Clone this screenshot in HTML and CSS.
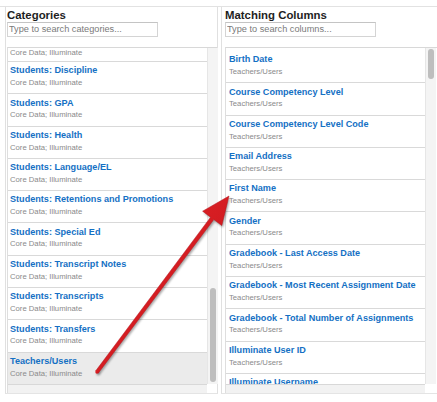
FILE: index.html
```html
<!DOCTYPE html>
<html>
<head>
<meta charset="utf-8">
<link rel="stylesheet" href="styles.css">
</head>
<body>
<div class="page">
  <section class="panel panel-left">
    <h2 class="panel-title">Categories</h2>
    <input class="search" type="text" placeholder="Type to search categories...">
    <div class="list">
      <div class="list-main">
        <div class="viewport">
          <div class="item partial"><div class="item-sub">Core Data; Illuminate</div></div>
          <div class="item"><div class="item-title">Students: Discipline</div><div class="item-sub">Core Data; Illuminate</div></div>
          <div class="item"><div class="item-title">Students: GPA</div><div class="item-sub">Core Data; Illuminate</div></div>
          <div class="item"><div class="item-title">Students: Health</div><div class="item-sub">Core Data; Illuminate</div></div>
          <div class="item"><div class="item-title">Students: Language/EL</div><div class="item-sub">Core Data; Illuminate</div></div>
          <div class="item"><div class="item-title">Students: Retentions and Promotions</div><div class="item-sub">Core Data; Illuminate</div></div>
          <div class="item"><div class="item-title">Students: Special Ed</div><div class="item-sub">Core Data; Illuminate</div></div>
          <div class="item"><div class="item-title">Students: Transcript Notes</div><div class="item-sub">Core Data; Illuminate</div></div>
          <div class="item"><div class="item-title">Students: Transcripts</div><div class="item-sub">Core Data; Illuminate</div></div>
          <div class="item"><div class="item-title">Students: Transfers</div><div class="item-sub">Core Data; Illuminate</div></div>
          <div class="item selected"><div class="item-title">Teachers/Users</div><div class="item-sub">Core Data; Illuminate</div></div>
        </div>
        <div class="vtrack"><div class="thumb" style="margin-top:240px;height:94px"></div></div>
      </div>
      <div class="hbar"><div class="htrack"></div><div class="corner"></div></div>
    </div>
  </section>
  <section class="panel panel-right">
    <h2 class="panel-title">Matching Columns</h2>
    <input class="search" type="text" placeholder="Type to search columns...">
    <div class="list">
      <div class="list-main">
        <div class="viewport padded">
          <div class="item"><div class="item-title">Birth Date</div><div class="item-sub">Teachers/Users</div></div>
          <div class="item"><div class="item-title">Course Competency Level</div><div class="item-sub">Teachers/Users</div></div>
          <div class="item"><div class="item-title">Course Competency Level Code</div><div class="item-sub">Teachers/Users</div></div>
          <div class="item"><div class="item-title">Email Address</div><div class="item-sub">Teachers/Users</div></div>
          <div class="item"><div class="item-title">First Name</div><div class="item-sub">Teachers/Users</div></div>
          <div class="item"><div class="item-title">Gender</div><div class="item-sub">Teachers/Users</div></div>
          <div class="item"><div class="item-title">Gradebook - Last Access Date</div><div class="item-sub">Teachers/Users</div></div>
          <div class="item"><div class="item-title">Gradebook - Most Recent Assignment Date</div><div class="item-sub">Teachers/Users</div></div>
          <div class="item"><div class="item-title">Gradebook - Total Number of Assignments</div><div class="item-sub">Teachers/Users</div></div>
          <div class="item"><div class="item-title">Illuminate User ID</div><div class="item-sub">Teachers/Users</div></div>
          <div class="item"><div class="item-title">Illuminate Username</div></div>
        </div>
        <div class="vtrack"><div class="thumb" style="margin-top:1px;height:30px"></div></div>
      </div>
      <div class="hbar"><div class="htrack"></div><div class="corner"></div></div>
    </div>
  </section>
</div>
<svg class="arrow" width="437" height="402" viewBox="0 0 437 402" xmlns="http://www.w3.org/2000/svg">
  <defs>
    <filter id="blur" x="-20%" y="-20%" width="140%" height="140%">
      <feGaussianBlur stdDeviation="1.2"/>
    </filter>
    <linearGradient id="red" x1="0" y1="0" x2="1" y2="1">
      <stop offset="0" stop-color="#e8282a"/>
      <stop offset="1" stop-color="#c2121a"/>
    </linearGradient>
  </defs>
  <g transform="translate(1.2,1.8)" filter="url(#blur)" fill="rgba(0,0,0,0.35)">
    <polygon points="95.6,371 210.6,217.2 202.6,211.2 229,196 221.8,225.6 213.8,219.6 98.4,373"/>
    <circle cx="97" cy="372" r="1.7"/>
  </g>
  <g fill="url(#red)" stroke="#b3121a" stroke-width="0.5" stroke-linejoin="round">
    <polygon points="95.6,371 210.6,217.2 202.6,211.2 229,196 221.8,225.6 213.8,219.6 98.4,373"/>
    <circle cx="97" cy="372" r="1.7" stroke="none"/>
  </g>
</svg>
</body>
</html>
```
FILE: styles.css
```css
html, body {
  margin: 0;
  padding: 0;
  background: #fff;
  overflow: hidden;
}
body {
  width: 437px;
  height: 402px;
  position: relative;
  font-family: "Liberation Sans", Arial, Helvetica, sans-serif;
}
.page {
  margin-top: 6px;
  border-top: 1px solid #e2e2e2;
  display: flex;
  align-items: flex-start;
  padding-left: 5px;
  gap: 3px;
  width: 432px;
  overflow: hidden;
}
.panel {
  box-sizing: border-box;
  border-left: 1px solid #e0e0e0;
  border-right: 1px solid #e0e0e0;
  border-bottom: 1px solid #e4e4e4;
  display: flex;
  flex-direction: column;
  align-items: flex-start;
  flex: none;
}
.panel-left {
  width: 213px;
  padding-left: 1px;
}
.panel-right {
  width: 224px;
  padding-left: 3px;
}
.panel-title {
  margin: 0;
  padding-top: 1.5px;
  font-size: 11.4px;
  line-height: 13px;
  font-weight: bold;
  color: #1e1e1e;
}
.search {
  box-sizing: border-box;
  width: 151px;
  height: 15px;
  margin: 0;
  padding: 0 0 0 1px;
  border: 1px solid #d4d4d4;
  border-top-color: #c4c4c4;
  font-family: "Liberation Sans", Arial, sans-serif;
  font-size: 9.2px;
  color: #333;
  background: #fff;
  outline: none;
}
.search::placeholder {
  color: #7a7a7a;
}
.list {
  margin-top: 10.5px;
  width: 210px;
  border-top: 1px solid #d8d8d8;
  border-left: 1px solid #dedede;
  box-sizing: border-box;
  display: flex;
  flex-direction: column;
}
.panel-right .list {
  width: 212px;
}
.list-main {
  display: flex;
  height: 336px;
}
.viewport {
  width: 199px;
  overflow: hidden;
  display: flex;
  flex-direction: column;
  flex: none;
}
.viewport.padded {
  padding-top: 3px;
}
.item {
  box-sizing: border-box;
  height: 32.3px;
  flex: none;
  border-bottom: 1px solid #d9d9d9;
  padding: 2.3px 0 0 2px;
  background: #fff;
}
.panel-right .item {
  padding-left: 3px;
}
.item.partial {
  height: 14px;
  padding-top: 0;
}
.item.partial .item-sub {
  margin-top: 0;
  line-height: 10px;
}
.item.selected {
  background: #ebebeb;
}
.item-title {
  font-size: 9.1px;
  line-height: 12px;
  font-weight: bold;
  color: #1470c4;
  white-space: nowrap;
}
.item-sub {
  margin-top: 0.7px;
  font-size: 7.7px;
  line-height: 12px;
  color: #8a8a8a;
  white-space: nowrap;
}
.vtrack {
  flex: none;
  width: 11px;
  box-sizing: border-box;
  border-left: 1px solid #e6e6e6;
  background: #f4f4f4;
  display: flex;
  flex-direction: column;
  padding-left: 2px;
}
.thumb {
  width: 6px;
  border-radius: 3px;
  background: #bebebe;
}
.hbar {
  display: flex;
  height: 9px;
  box-sizing: border-box;
}
.htrack {
  width: 199px;
  box-sizing: border-box;
  border-top: 1px solid #d8d8d8;
  background: #f2f2f2;
}
.corner {
  flex: 1;
  background: #fff;
}
.arrow {
  position: absolute;
  left: 0;
  top: 0;
  pointer-events: none;
}
```
